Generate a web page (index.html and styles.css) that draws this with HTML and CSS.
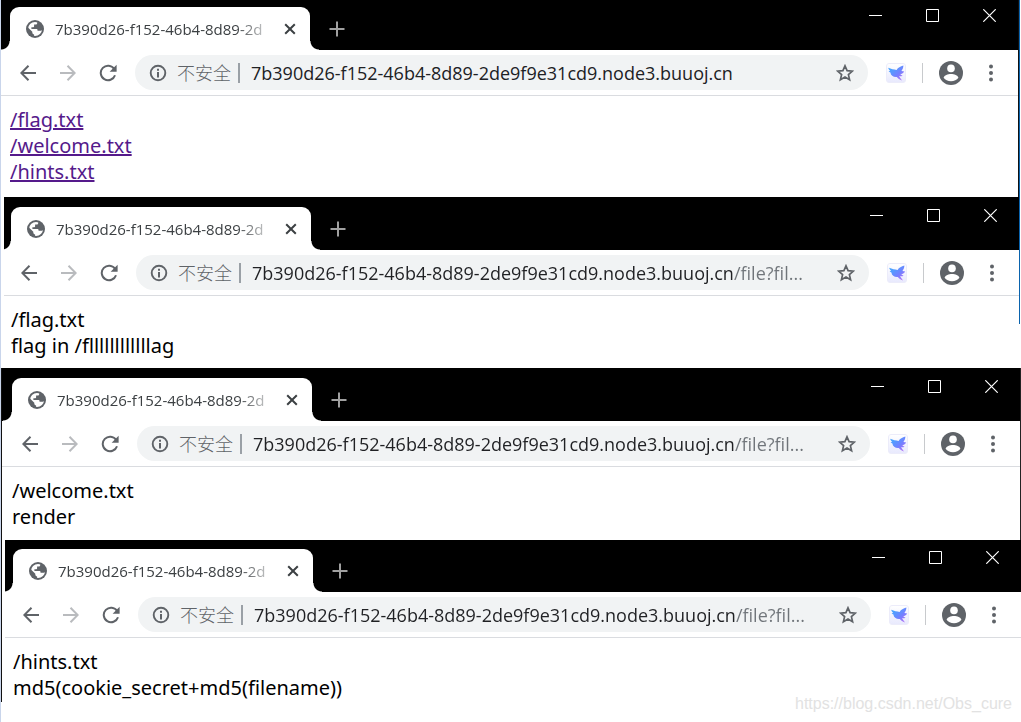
FILE: index.html
```
<!DOCTYPE html>
<html lang="zh-CN">
<head>
    <meta charset="UTF-8">
    <meta name="viewport" content="width=device-width, initial-scale=1.0">
    <title>7b390d26-f152-46b4-8d89-2de9f9e31cd9.node3.buuoj.cn</title>
    <link rel="stylesheet" href="styles.css">
</head>
<body>
    <!-- Shared icons -->
    <svg class="sprite" aria-hidden="true">
        <defs>
            <linearGradient id="birdFill" x1="0" y1="0" x2="1" y2="1">
                <stop offset="0.2" stop-color="#4aa3ff"/>
                <stop offset="0.6" stop-color="#7480ff"/>
                <stop offset="1" stop-color="#c86cf4"/>
            </linearGradient>
            <linearGradient id="birdTile" x1="0" y1="0" x2="0" y2="1">
                <stop offset="0" stop-color="#fff"/>
                <stop offset="1" stop-color="#e8e9fd"/>
            </linearGradient>
        </defs>
        <symbol id="globe" viewBox="2 2 20 20">
            <circle cx="12" cy="12" r="10" fill="#5f6368"/>
            <circle cx="12" cy="12" r="7.8" fill="#fff"/>
            <path d="M11 20.5C6.5 20 3.5 16.2 3.5 12 3.5 11.3 3.7 10.7 3.9 10L9 15V16C9 17.1 9.9 18 11 18Z" fill="#5f6368"/>
            <path d="M14.5 3.8V5C14.5 6.1 14 7 12.8 7H11V9C11 9.6 10.6 10 10 10H8V12H13.5C14.3 12 14.8 12.4 14.8 13.2V14H17.5C18.8 14 19.6 13.4 20.4 12.6A8.5 8.5 0 0 0 14.5 3.8Z" fill="#5f6368"/>
        </symbol>
        <symbol id="tab-close" viewBox="0 0 12 12">
            <path d="M1.2 1.2 10.8 10.8M10.8 1.2 1.2 10.8" stroke="#3c4043" stroke-width="2"/>
        </symbol>
        <symbol id="plus" viewBox="0 0 16 16">
            <path d="M8 .5V15.5M.5 8H15.5" stroke="#a0a0a0" stroke-width="2"/>
        </symbol>
        <symbol id="min" viewBox="0 0 13 13"><path d="M0 6.5H13" stroke="#fff"/></symbol>
        <symbol id="max" viewBox="0 0 13 13"><path d="M.5 .5H12.5V12.5H.5Z" fill="none" stroke="#fff"/></symbol>
        <symbol id="close" viewBox="0 0 13 13"><path d="M.3 .3 12.7 12.7M12.7 .3 .3 12.7" stroke="#fff" stroke-width="1.2"/></symbol>
        <symbol id="arrow" viewBox="0 0 16 16">
            <path d="M16 8H1.5M8.5 .8 1.3 8 8.5 15.2" fill="none" stroke="currentColor" stroke-width="2"/>
        </symbol>
        <symbol id="reload" viewBox="0 0 18 18">
            <path d="M15.2 5A7.3 7.3 0 1 0 16 11.2" fill="none" stroke="#5f6368" stroke-width="2"/>
            <path d="M17.6 .8V7.8H10.6Z" fill="#5f6368"/>
        </symbol>
        <symbol id="info" viewBox="0 0 18 18">
            <circle cx="9" cy="9" r="7.3" fill="none" stroke="#5f6368" stroke-width="1.9"/>
            <path d="M9 8V13.4M9 4.8V6.7" stroke="#5f6368" stroke-width="2"/>
        </symbol>
        <symbol id="star" viewBox="0 0 18 18">
            <path d="M9 1.8 11.1 6.6 16.4 7.1 12.4 10.6 13.6 15.8 9 13 4.4 15.8 5.6 10.6 1.6 7.1 6.9 6.6Z" fill="none" stroke="#5f6368" stroke-width="1.7"/>
        </symbol>
        <symbol id="bird" viewBox="0 0 20 20">
            <rect x=".5" y=".5" width="19" height="19" rx="2.5" fill="url(#birdTile)" stroke="#ececfa"/>
            <path d="M2.2 4.8C5 6.2 8 6.4 10.6 7 12 4.6 14.4 3.6 17.4 2.6 17.4 4.8 16.6 6.6 15.4 8L18.2 8.4C17 10.2 15.6 11 14.2 11.4L16.6 12.8C15.2 13.4 14 13.4 13 13.2L16 17.4C13.6 16.8 12 15.6 10.8 14 7.4 14.4 4.8 12.4 4.4 9.4L2.6 8.6 4.2 7.8C3.2 7 2.6 6.2 2.2 4.8Z" fill="url(#birdFill)"/>
        </symbol>
        <symbol id="avatar" viewBox="0 0 24 24">
            <circle cx="12" cy="12" r="12" fill="#5f6368"/>
            <circle cx="12" cy="7.4" r="3.8" fill="#fff"/>
            <path d="M4.6 16.8C5.2 14.2 8.8 13 12 13S18.8 14.2 19.4 16.8C17.8 19 15.2 20.3 12 20.3S6.2 19 4.6 16.8Z" fill="#fff"/>
        </symbol>
        <symbol id="dots" viewBox="0 0 4 18">
            <circle cx="2" cy="2.5" r="2" fill="#5f6368"/>
            <circle cx="2" cy="9" r="2" fill="#5f6368"/>
            <circle cx="2" cy="15.5" r="2" fill="#5f6368"/>
        </symbol>
    </svg>

    <main class="page">
        <section class="window window-index">
            <div class="titlebar">
                <div class="tab">
                    <svg class="icon-18"><use href="#globe"/></svg>
                    <span class="tab-title">7b390d26-f152-46b4-8d89-2d</span>
                    <button class="tab-close" aria-label="Close tab"><svg class="icon-12"><use href="#tab-close"/></svg></button>
                </div>
                <button class="new-tab" aria-label="New tab"><svg class="icon-16"><use href="#plus"/></svg></button>
                <div class="controls">
                    <button aria-label="Minimize"><svg class="icon-13"><use href="#min"/></svg></button>
                    <button aria-label="Maximize"><svg class="icon-13"><use href="#max"/></svg></button>
                    <button aria-label="Close"><svg class="icon-13"><use href="#close"/></svg></button>
                </div>
            </div>
            <div class="toolbar">
                <button class="nav" aria-label="Back"><svg class="icon-16"><use href="#arrow"/></svg></button>
                <button class="nav forward" aria-label="Forward"><svg class="icon-16"><use href="#arrow"/></svg></button>
                <button class="nav" aria-label="Reload"><svg class="icon-18"><use href="#reload"/></svg></button>
                <div class="omnibox">
                    <svg class="icon-18"><use href="#info"/></svg>
                    <label class="insecure" for="url1">不安全</label>
                    <input class="url" id="url1" type="text" value="7b390d26-f152-46b4-8d89-2de9f9e31cd9.node3.buuoj.cn">
                    <button class="star" aria-label="Bookmark"><svg class="icon-18"><use href="#star"/></svg></button>
                </div>
                <button class="extension" aria-label="Extension"><svg class="icon-20"><use href="#bird"/></svg></button>
                <button class="profile" aria-label="Profile"><svg class="icon-24"><use href="#avatar"/></svg></button>
                <button class="menu" aria-label="Menu"><svg class="icon-dots"><use href="#dots"/></svg></button>
            </div>
            <div class="content">
                <div><a href="#flag">/flag.txt</a></div>
                <div><a href="#welcome">/welcome.txt</a></div>
                <div><a href="#hints">/hints.txt</a></div>
            </div>
        </section>

        <section class="window window-flag" id="flag">
            <div class="titlebar">
                <div class="tab">
                    <svg class="icon-18"><use href="#globe"/></svg>
                    <span class="tab-title">7b390d26-f152-46b4-8d89-2d</span>
                    <button class="tab-close" aria-label="Close tab"><svg class="icon-12"><use href="#tab-close"/></svg></button>
                </div>
                <button class="new-tab" aria-label="New tab"><svg class="icon-16"><use href="#plus"/></svg></button>
                <div class="controls">
                    <button aria-label="Minimize"><svg class="icon-13"><use href="#min"/></svg></button>
                    <button aria-label="Maximize"><svg class="icon-13"><use href="#max"/></svg></button>
                    <button aria-label="Close"><svg class="icon-13"><use href="#close"/></svg></button>
                </div>
            </div>
            <div class="toolbar">
                <button class="nav" aria-label="Back"><svg class="icon-16"><use href="#arrow"/></svg></button>
                <button class="nav forward" aria-label="Forward"><svg class="icon-16"><use href="#arrow"/></svg></button>
                <button class="nav" aria-label="Reload"><svg class="icon-18"><use href="#reload"/></svg></button>
                <div class="omnibox">
                    <svg class="icon-18"><use href="#info"/></svg>
                    <label class="insecure" for="url2">不安全</label>
                    <input class="url url-path" id="url2" type="text" value="7b390d26-f152-46b4-8d89-2de9f9e31cd9.node3.buuoj.cn/file?fil...">
                    <button class="star" aria-label="Bookmark"><svg class="icon-18"><use href="#star"/></svg></button>
                </div>
                <button class="extension" aria-label="Extension"><svg class="icon-20"><use href="#bird"/></svg></button>
                <button class="profile" aria-label="Profile"><svg class="icon-24"><use href="#avatar"/></svg></button>
                <button class="menu" aria-label="Menu"><svg class="icon-dots"><use href="#dots"/></svg></button>
            </div>
            <div class="content">
                <div>/flag.txt</div>
                <div>flag in /fllllllllllllag</div>
            </div>
        </section>

        <section class="window window-welcome" id="welcome">
            <div class="titlebar">
                <div class="tab">
                    <svg class="icon-18"><use href="#globe"/></svg>
                    <span class="tab-title">7b390d26-f152-46b4-8d89-2d</span>
                    <button class="tab-close" aria-label="Close tab"><svg class="icon-12"><use href="#tab-close"/></svg></button>
                </div>
                <button class="new-tab" aria-label="New tab"><svg class="icon-16"><use href="#plus"/></svg></button>
                <div class="controls">
                    <button aria-label="Minimize"><svg class="icon-13"><use href="#min"/></svg></button>
                    <button aria-label="Maximize"><svg class="icon-13"><use href="#max"/></svg></button>
                    <button aria-label="Close"><svg class="icon-13"><use href="#close"/></svg></button>
                </div>
            </div>
            <div class="toolbar">
                <button class="nav" aria-label="Back"><svg class="icon-16"><use href="#arrow"/></svg></button>
                <button class="nav forward" aria-label="Forward"><svg class="icon-16"><use href="#arrow"/></svg></button>
                <button class="nav" aria-label="Reload"><svg class="icon-18"><use href="#reload"/></svg></button>
                <div class="omnibox">
                    <svg class="icon-18"><use href="#info"/></svg>
                    <label class="insecure" for="url3">不安全</label>
                    <input class="url url-path" id="url3" type="text" value="7b390d26-f152-46b4-8d89-2de9f9e31cd9.node3.buuoj.cn/file?fil...">
                    <button class="star" aria-label="Bookmark"><svg class="icon-18"><use href="#star"/></svg></button>
                </div>
                <button class="extension" aria-label="Extension"><svg class="icon-20"><use href="#bird"/></svg></button>
                <button class="profile" aria-label="Profile"><svg class="icon-24"><use href="#avatar"/></svg></button>
                <button class="menu" aria-label="Menu"><svg class="icon-dots"><use href="#dots"/></svg></button>
            </div>
            <div class="content">
                <div>/welcome.txt</div>
                <div>render</div>
            </div>
        </section>

        <section class="window window-hints" id="hints">
            <div class="titlebar">
                <div class="tab">
                    <svg class="icon-18"><use href="#globe"/></svg>
                    <span class="tab-title">7b390d26-f152-46b4-8d89-2d</span>
                    <button class="tab-close" aria-label="Close tab"><svg class="icon-12"><use href="#tab-close"/></svg></button>
                </div>
                <button class="new-tab" aria-label="New tab"><svg class="icon-16"><use href="#plus"/></svg></button>
                <div class="controls">
                    <button aria-label="Minimize"><svg class="icon-13"><use href="#min"/></svg></button>
                    <button aria-label="Maximize"><svg class="icon-13"><use href="#max"/></svg></button>
                    <button aria-label="Close"><svg class="icon-13"><use href="#close"/></svg></button>
                </div>
            </div>
            <div class="toolbar">
                <button class="nav" aria-label="Back"><svg class="icon-16"><use href="#arrow"/></svg></button>
                <button class="nav forward" aria-label="Forward"><svg class="icon-16"><use href="#arrow"/></svg></button>
                <button class="nav" aria-label="Reload"><svg class="icon-18"><use href="#reload"/></svg></button>
                <div class="omnibox">
                    <svg class="icon-18"><use href="#info"/></svg>
                    <label class="insecure" for="url4">不安全</label>
                    <input class="url url-path" id="url4" type="text" value="7b390d26-f152-46b4-8d89-2de9f9e31cd9.node3.buuoj.cn/file?fil...">
                    <button class="star" aria-label="Bookmark"><svg class="icon-18"><use href="#star"/></svg></button>
                </div>
                <button class="extension" aria-label="Extension"><svg class="icon-20"><use href="#bird"/></svg></button>
                <button class="profile" aria-label="Profile"><svg class="icon-24"><use href="#avatar"/></svg></button>
                <button class="menu" aria-label="Menu"><svg class="icon-dots"><use href="#dots"/></svg></button>
            </div>
            <div class="content">
                <div>/hints.txt</div>
                <div>md5(cookie_secret+md5(filename))</div>
            </div>
        </section>

        <div class="watermark">https://blog.csdn.net/Obs_cure</div>
    </main>
</body>
</html>
```
FILE: styles.css
```
* {
    box-sizing: border-box;
}
body {
    margin: 0;
    background-color: #fff;
    font-family: "Open Sans", "Noto Sans CJK SC", sans-serif;
}
button {
    display: flex;
    align-items: center;
    justify-content: center;
    flex: none;
    padding: 0;
    border: none;
    background: none;
}
svg {
    display: block;
    flex: none;
}
.sprite {
    position: absolute;
    width: 0;
    height: 0;
}
.icon-12 { width: 12px; height: 12px; }
.icon-13 { width: 13px; height: 13px; }
.icon-16 { width: 16px; height: 16px; }
.icon-18 { width: 18px; height: 18px; }
.icon-20 { width: 20px; height: 20px; }
.icon-24 { width: 24px; height: 24px; }
.icon-dots { width: 4px; height: 18px; }

.page {
    position: relative;
    min-height: 100vh;
    border-left: 1px solid #c9d5eb;
    /* thin window borders on both sides */
    background:
        linear-gradient(#111, #111) right 2px top 0 / 1px 197px no-repeat,
        linear-gradient(#0a63ad, #0a63ad) right 1px top 0 / 1px 324px no-repeat,
        linear-gradient(#222, #222) right 0 top 368px / 1px 172px no-repeat,
        linear-gradient(#111, #111) left 0 top 368px / 1px 334px no-repeat;
}

/* --lead is the gap from the window edge to its tab */
.window {
    display: flex;
    flex-direction: column;
}
.window-index {
    --lead: 9px;
    --top: 7px;
    margin: 0 3px 0 0;
}
.window-flag {
    --lead: 7px;
    --top: 10px;
    margin: 0 2px 0 3px;
}
.window-welcome {
    --lead: 10px;
    --top: 10px;
    margin: 0 1px 0 1px;
}
.window-hints {
    --lead: 8px;
    --top: 9px;
    margin: 0 0 0 4px;
}

.titlebar {
    display: flex;
    align-items: flex-start;
    padding: var(--top) 0 0 var(--lead);
    background-color: #000;
    overflow: hidden;
}
.tab {
    position: relative;
    display: flex;
    align-items: center;
    width: 300px;
    height: 43px;
    padding: 0 14px 0 16px;
    border-radius: 9px 9px 0 0;
    background-color: #fff;
}
.tab::before,
.tab::after {
    content: "";
    position: absolute;
    bottom: 0;
    width: 9px;
    height: 9px;
}
.tab::before {
    right: 100%;
    background: radial-gradient(circle at 0 0, #000 8px, #fff 9px);
}
.tab::after {
    left: 100%;
    background: radial-gradient(circle at 100% 0, #000 8px, #fff 9px);
}
.tab-title {
    flex: 1;
    min-width: 0;
    margin: 0 8px 0 11px;
    white-space: nowrap;
    font-size: 15px;
    line-height: 20px;
    color: #3c4043;
    mask-image: linear-gradient(90deg, #000 calc(100% - 40px), transparent);
}
.new-tab {
    width: 36px;
    height: 43px;
    margin-left: 9px;
}
.controls {
    display: flex;
    margin-left: auto;
}
.controls button {
    width: 57px;
    height: 17px;
}

.toolbar {
    display: flex;
    align-items: center;
    height: 46px;
    padding: 0 20px 0 var(--lead);
    border-bottom: 1px solid #dadce0;
    background-color: #fff;
}
.nav {
    width: 36px;
    height: 35px;
    margin-right: 4px;
    color: #5f6368;
}
.forward {
    color: #b9bbbe;
}
.forward svg {
    transform: scaleX(-1);
}
.omnibox {
    display: flex;
    align-items: center;
    flex: 1;
    min-width: 0;
    height: 35px;
    margin-left: 5px;
    padding: 0 14px;
    border-radius: 18px;
    background-color: #f1f3f4;
}
.insecure {
    display: flex;
    align-items: center;
    height: 20px;
    margin-left: 10px;
    padding-right: 7px;
    border-right: 2px solid #9aa0a6;
    font-size: 18px;
    font-weight: 300;
    line-height: 20px;
    color: #5f6368;
}
.url {
    flex: 1;
    min-width: 0;
    height: 30px;
    margin: 0 10px 0 11px;
    padding: 0;
    border: none;
    outline: none;
    background: none;
    font-family: "Open Sans", sans-serif;
    font-size: 18px;
    color: #202124;
}
/* dark host, grey path */
.url-path {
    background: linear-gradient(90deg, #202124 482px, #70757a 482px);
    -webkit-background-clip: text;
    background-clip: text;
    -webkit-text-fill-color: transparent;
}
.extension {
    width: 20px;
    margin-left: 18px;
}
.profile {
    height: 20px;
    margin-left: 16px;
    padding-left: 16px;
    border-left: 1px solid #c8cacd;
}
.menu {
    width: 14px;
    margin-left: 21px;
}

.content {
    min-height: 72px;
    padding: 11px 0 0 var(--lead);
    font-family: "Noto Sans", sans-serif;
    font-size: 20px;
    line-height: 26px;
    color: #000;
}
.window-index .content {
    min-height: 101px;
}
.window-welcome .content {
    min-height: 73px;
}
.content a {
    color: #551a8b;
}
.watermark {
    position: absolute;
    right: 9px;
    bottom: 9px;
    font-family: "Liberation Sans", Arial, sans-serif;
    font-size: 16px;
    line-height: 18px;
    color: #e2e2e2;
}
```
